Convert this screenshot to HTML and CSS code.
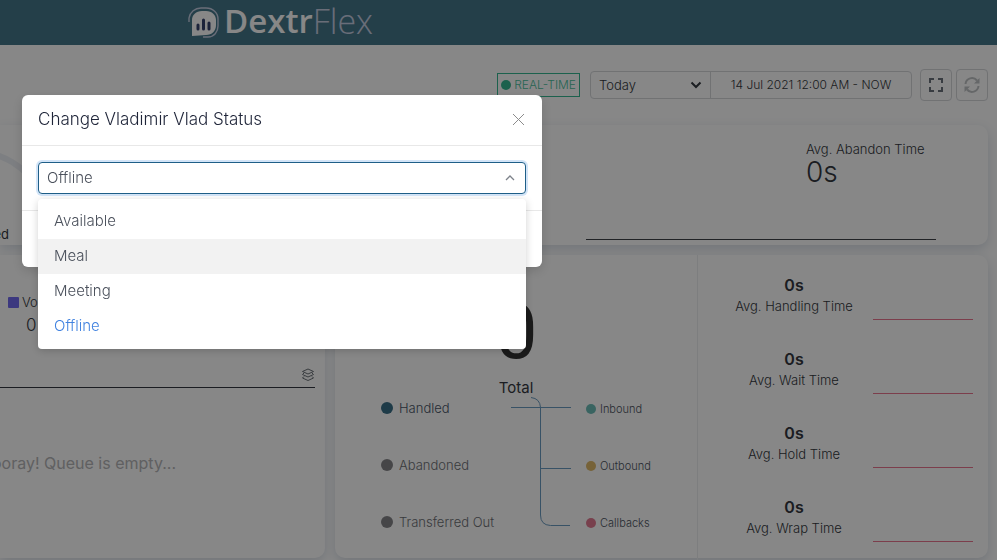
FILE: index.html
```html
<!DOCTYPE html>
<html lang="en">
<head>
<meta charset="utf-8">
<meta name="viewport" content="width=device-width, initial-scale=1">
<title>DextrFlex</title>
<link rel="stylesheet" href="styles.css">
</head>
<body>
<header class="topbar">
  <a class="logo" href="#" aria-label="DextrFlex">
    <svg class="logo-mark" viewBox="0 0 32 32" aria-hidden="true">
      <path d="M4 29V13C4 8 8 4 14 4h4c6 0 10 4 10 9v5c0 6-4 10-10 10z" fill="#fff"/>
      <path d="M1 15V11C2 5 7 1 13 1h5c7 0 12 5 12 11v7c0 6-4 11-10 11h-5" fill="none" stroke="#c6cee2" stroke-width="1.400"/>
      <path d="M10 18v4M15.500 13v9M21 16v6" fill="none" stroke="#36426f" stroke-width="3" stroke-linecap="round"/>
    </svg>
    <span class="logo-bold">Dextr</span><span class="logo-light">Flex</span>
  </a>
</header>

<main class="page">
  <div class="toolbar">
    <span class="live"><i class="dot"></i>REAL-TIME</span>
    <div class="range">
      <div class="period">
        <select aria-label="Period"><option>Today</option></select>
        <svg viewBox="0 0 12 8" aria-hidden="true"><path d="M1.500 1.500L6 6l4.500-4.500" fill="none" stroke="#343a40" stroke-width="2"/></svg>
      </div>
      <button class="dates" type="button">14 Jul 2021 12:00 AM - NOW</button>
    </div>
    <div class="tools">
      <button class="tool" type="button" aria-label="Full screen">
        <svg viewBox="0 0 16 16" aria-hidden="true"><path d="M2 6V2h4M10 2h4v4M14 10v4h-4M6 14H2v-4" fill="none" stroke="#6a727b" stroke-width="2"/></svg>
      </button>
      <button class="tool" type="button" aria-label="Refresh">
        <svg viewBox="0 0 16 16" aria-hidden="true"><path d="M1.500 7A6.500 6.500 0 0 1 13 3.500M14.500 9A6.500 6.500 0 0 1 3 12.500" fill="none" stroke="#bfc2c5" stroke-width="2"/><path d="M15.500 1v5.500H10zM.5 15V9.500H6z" fill="#bfc2c5"/></svg>
      </button>
    </div>
  </div>

  <section class="card summary">
    <div class="gauge">
      <svg viewBox="0 0 60 70" aria-hidden="true"><path d="M-30 4C0 4 28 18 42 50" fill="none" stroke="#edf0f5" stroke-width="6"/></svg>
      <span class="gauge-label">Answered</span>
    </div>
    <div class="abandon">
      <div class="abandon-text">
        <div class="label">Avg. Abandon Time</div>
        <div class="abandon-value">0s</div>
      </div>
    </div>
  </section>

  <div class="columns">
    <section class="card queue">
      <div class="legend"><i class="square"></i>Voice</div>
      <div class="legend-value">0</div>
      <div class="queue-bar">
        <svg viewBox="0 0 14 14" aria-hidden="true"><path d="M7 1l5.500 2.500L7 6 1.500 3.500zM3 5L1.500 6.500 7 9l5.500-2.500L11 5M3 8.500L1.500 10 7 12.500l5.500-2.500L11 8.500" fill="none" stroke="#6b7178"/></svg>
      </div>
      <p class="empty">Hooray! Queue is empty...</p>
    </section>

    <section class="card calls">
      <div class="totals">
        <div class="total-value">0</div>
        <div class="total-label">Total</div>
        <div class="breakdown">
          <ul class="states">
            <li class="handled"><i class="dot"></i>Handled</li>
            <li><i class="dot"></i>Abandoned</li>
            <li><i class="dot"></i>Transferred Out</li>
          </ul>
          <svg class="links" viewBox="0 0 62 132" aria-hidden="true"><path d="M0 11.500h60M20 1.500q9 1 9.500 10V119q0 10 10 10.500H59M29.500 72.500H60" fill="none" stroke="#6b9bc0"/></svg>
          <ul class="kinds">
            <li><i class="dot teal"></i>Inbound</li>
            <li><i class="dot amber"></i>Outbound</li>
            <li><i class="dot pink"></i>Callbacks</li>
          </ul>
        </div>
      </div>
      <div class="metrics">
        <div class="metric"><div><strong>0s</strong><span class="label">Avg. Handling Time</span></div><i class="spark"></i></div>
        <div class="metric"><div><strong>0s</strong><span class="label">Avg. Wait Time</span></div><i class="spark"></i></div>
        <div class="metric"><div><strong>0s</strong><span class="label">Avg. Hold Time</span></div><i class="spark"></i></div>
        <div class="metric"><div><strong>0s</strong><span class="label">Avg. Wrap Time</span></div><i class="spark"></i></div>
      </div>
    </section>
  </div>
</main>

<div class="mask">
  <div class="modal" role="dialog" aria-labelledby="modal-title">
    <div class="modal-head">
      <h1 id="modal-title">Change Vladimir Vlad Status</h1>
      <button class="close" type="button" aria-label="Close">
        <svg viewBox="0 0 13 13" aria-hidden="true"><path d="M1 1l11 11M12 1L1 12" fill="none" stroke="#8c8c8c"/></svg>
      </button>
    </div>
    <div class="modal-body">
      <div class="status">
        <select aria-label="Status"><option>Offline</option><option>Available</option><option>Meal</option><option>Meeting</option></select>
        <svg viewBox="0 0 10 6" aria-hidden="true"><path d="M1 5l4-4 4 4" fill="none" stroke="#7d828a" stroke-width="1.300"/></svg>
        <ul class="menu" role="listbox" aria-label="Status options">
          <li role="option">Available</li>
          <li role="option" class="active">Meal</li>
          <li role="option">Meeting</li>
          <li role="option" class="selected" aria-selected="true">Offline</li>
        </ul>
      </div>
    </div>
    <div class="modal-foot"></div>
  </div>
</div>
</body>
</html>
```
FILE: styles.css
```css
* { box-sizing: border-box; }
body {
  margin: 0;
  height: 100vh;
  overflow: hidden;
  background: #fff;
  color: #343840;
  font: 300 13px/20px Inter, "Open Sans", sans-serif;
}
ul { margin: 0; padding: 0; list-style: none; }
button, select { font: inherit; color: inherit; }
svg { display: block; flex: none; }

.topbar {
  height: 45px;
  padding-left: 188px;
  display: flex;
  align-items: center;
  background: #45788b;
}
.logo {
  display: flex;
  align-items: center;
  height: 40px;
  color: #fff;
  text-decoration: none;
  font: 600 33px/36px "Open Sans", sans-serif;
}
.logo-mark { width: 32px; height: 32px; margin-right: 4px; }
.logo-bold, .logo-light { padding-bottom: 4px; }
.logo-light { font-weight: 300; font-size: 34px; color: #c6cee2; }

.page { padding-right: 9px; }
.toolbar {
  display: flex;
  justify-content: flex-end;
  align-items: center;
  height: 80px;
}
.live {
  display: flex;
  align-items: center;
  gap: 3px;
  height: 24px;
  padding: 0 3px;
  margin-right: 10px;
  border: 1px solid #36b892;
  color: #4cc09e;
  font-size: 12px;
}
.dot { width: 12px; height: 12px; border-radius: 50%; background: #858589; flex: none; }
.live .dot { width: 10px; height: 10px; background: #36b892; }
.range {
  display: flex;
  height: 28px;
  border: 1px solid #d5d7da;
  border-radius: 4px;
  margin-right: 8px;
}
.period {
  position: relative;
  display: flex;
  align-items: center;
  width: 120px;
  border-right: 1px solid #d5d7da;
}
.period select {
  appearance: none;
  width: 100%;
  height: 100%;
  padding: 0 8px;
  border: 0;
  background: none;
}
.period svg { position: absolute; right: 8px; width: 12px; height: 8px; }
.dates { width: 200px; border: 0; background: none; padding: 0; font-size: 12px; }
.tools { display: flex; gap: 4px; }
.tool {
  width: 32px;
  height: 32px;
  padding: 7px;
  border: 1px solid #d5d7da;
  border-radius: 4px;
  background: none;
}
.tool svg { width: 16px; height: 16px; }

.card {
  background: #fff;
  border-radius: 0 10px 10px 0;
  box-shadow: 0 4px 12px #d8dee6;
}
.label { font-size: 13px; }
.summary { display: flex; justify-content: space-between; height: 120px; margin-bottom: 10px; }
.gauge { display: flex; flex-direction: column; justify-content: space-between; width: 60px; padding: 22px 0 1px; overflow: hidden; }
.gauge svg { width: 60px; height: 70px; }
.gauge-label { width: 9px; display: flex; justify-content: flex-end; font-weight: 400; font-size: 13px; }
.abandon {
  width: 350px;
  height: 115px;
  margin-right: 52px;
  padding-top: 14px;
  display: flex;
  justify-content: flex-end;
  border-bottom: 1px solid #3f4348;
}
.abandon-text { width: 130px; white-space: nowrap; }
.abandon-value { font-size: 28px; line-height: 26px; }

.columns { display: grid; grid-template-columns: 325fr 653fr; gap: 10px; }
.queue { min-width: 0; padding: 37px 10px 0 0; }
.legend { display: flex; align-items: center; gap: 3px; padding-left: 8px; font-size: 13px; }
.square { width: 11px; height: 11px; background: #716bf0; border-radius: 1px; }
.legend-value { padding-left: 26px; font-size: 17px; line-height: 26px; }
.queue-bar { display: flex; justify-content: flex-end; margin-top: 30px; padding-bottom: 5px; border-bottom: 1px solid #343840; }
.queue-bar svg { width: 14px; height: 14px; }
.empty {
  width: 176px;
  margin: 63px 0 0;
  display: flex;
  justify-content: flex-end;
  white-space: nowrap;
  overflow: hidden;
  font-size: 16px;
  line-height: 24px;
  font-weight: 400;
  color: #b5b5b8;
}

.calls { display: grid; grid-template-columns: 363fr 290fr; height: 303px; border-radius: 10px; }
.totals { padding-top: 44px; text-align: center; border-right: 1px solid #eceef0; }
.total-value { font: 400 76px/66px Roboto, sans-serif; color: #333; }
.total-label { margin-top: 11px; font-size: 15px; line-height: 24px; font-weight: 400; }
.breakdown { display: flex; margin-top: -1px; padding-left: 46px; text-align: left; }
.states { width: 130px; font-size: 13px; color: #6d7075; white-space: nowrap; }
.states li, .kinds li { display: flex; align-items: center; height: 57px; padding-bottom: 39px; gap: 6px; }
.states .handled { color: #495567; }
.handled .dot { background: #3a7088; }
.links { width: 62px; height: 132px; margin-right: 13px; margin-top: -3px; }
.kinds { padding-top: 1px; font-size: 11px; color: #4c5360; }
.kinds li { gap: 4px; }
.kinds .dot { width: 10px; height: 10px; }
.kinds .teal { background: #6cbdb8; }
.kinds .amber { background: #dfb96a; }
.kinds .pink { background: #e27a92; }

.metrics { padding: 19px 15px 0 28px; }
.metric { display: flex; justify-content: space-between; height: 74px; text-align: center; }
.metric > div { width: 136px; display: flex; flex-direction: column; }
.metric strong { font-weight: 600; font-size: 16px; line-height: 22px; }
.metric .label { white-space: nowrap; }
.spark { width: 100px; height: 46px; border-bottom: 1px solid #ea7590; }

.mask { position: fixed; inset: 0; background: rgba(0, 0, 0, .47); }
.modal {
  width: 520px;
  margin: 95px 0 0 22px;
  background: #fff;
  border-radius: 6px;
  box-shadow: 0 4px 12px rgba(0, 0, 0, .15);
}
.modal-head {
  display: flex;
  justify-content: space-between;
  align-items: center;
  height: 51px;
  padding: 0 16px 2px;
  border-bottom: 1px solid #e8e8e8;
}
.modal-head h1 { margin: 0; font-size: 17px; line-height: 24px; font-weight: 300; color: #1e2438; }
.close { padding: 1px; border: 0; background: none; }
.close svg { width: 13px; height: 13px; }
.modal-body { padding: 16px; border-bottom: 1px solid #e8e8e8; }
.modal-foot { height: 56px; }
.status { position: relative; font-size: 15px; color: #4b515c; }
.status select {
  display: block;
  appearance: none;
  width: 100%;
  height: 32px;
  padding: 0 8px;
  border: 1px solid #1f5f88;
  border-radius: 4px;
  background: #fff;
  box-shadow: 0 0 0 2px #d3e5f8;
}
.status > svg { position: absolute; right: 11px; top: 13px; width: 10px; height: 6px; }
.menu {
  position: absolute;
  top: 37px;
  left: 0;
  right: 0;
  padding: 5px 0;
  background: #fff;
  border-radius: 4px;
  box-shadow: 0 2px 8px rgba(0, 0, 0, .18);
}
.menu li { height: 35px; padding: 0 16px; line-height: 34px; }
.menu .active { background: #f2f2f2; }
.menu .selected { color: #4283e0; }
```
